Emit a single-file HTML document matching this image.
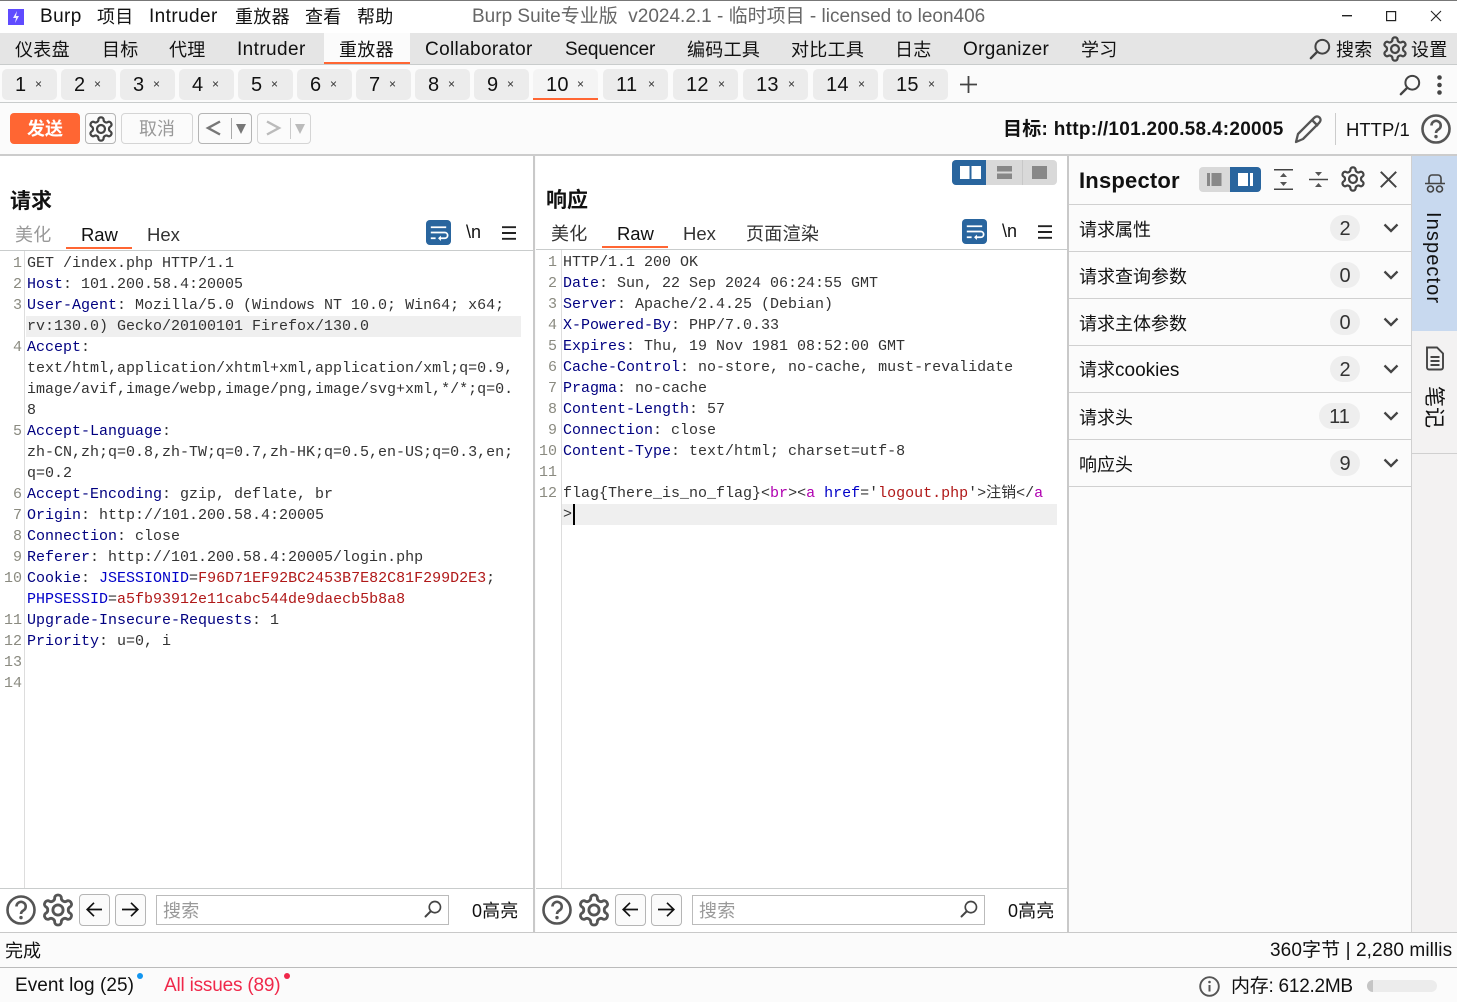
<!DOCTYPE html>
<html lang="zh"><head><meta charset="utf-8"><title>Burp Suite</title>
<style>
html,body{margin:0;padding:0;width:1457px;height:1002px;overflow:hidden;background:#fbfbfb}
body{position:relative;font-family:"Liberation Sans","Noto Sans CJK SC",sans-serif;color:#111}
.t{position:absolute;white-space:nowrap;line-height:20px;height:20px;font-size:19px;letter-spacing:.4px}
.c{font-size:18px;letter-spacing:.3px}
.b{position:absolute}
.tab{position:absolute;top:69px;height:31px;background:#ececec;border-radius:5px}
.tab .n{position:absolute;left:13px;top:6px;font-size:20px;line-height:20px;letter-spacing:.3px}
.tab .x{position:absolute;top:9px;font-size:12px;line-height:12px;color:#333}
svg{position:absolute;overflow:visible}
.code{position:absolute;top:253px;font:15px/21px "Liberation Mono","Noto Sans CJK SC",monospace;color:#333;white-space:pre}
.num{position:absolute;top:253px;width:22px;text-align:right;font:15px/21px "Liberation Mono",monospace;color:#8a8a80;white-space:pre}
.k{color:#000080}.ck{color:#0000c8}.cv{color:#b01818}.tg{color:#b000b0}.at{color:#0000c8}
.ln{position:absolute;background:#c9cccc}
.row{position:absolute;left:1069px;width:342px;height:46px;border-bottom:1.5px solid #d0d0d0}
.pill{position:absolute;top:10px;height:26px;border-radius:13px;background:#eee;font-size:20px;line-height:28px;text-align:center;color:#333}
.btn{position:absolute;border:1px solid #b5b5b5;border-radius:4px;box-sizing:border-box;background:#fbfbfb}
</style></head><body>
<svg width="0" height="0" style="position:absolute"><defs>
<symbol id="gear" viewBox="0 0 24 24"><path fill="none" stroke="currentColor" stroke-width="1.9" d="M12.22 2h-.44a2 2 0 0 0-2 2v.18a2 2 0 0 1-1 1.730l-.43.25a2 2 0 0 1-2 0l-.15-.08a2 2 0 0 0-2.730.73l-.22.38a2 2 0 0 0 .73 2.730l.15.1a2 2 0 0 1 1 1.720v.51a2 2 0 0 1-1 1.740l-.15.09a2 2 0 0 0-.73 2.730l.22.38a2 2 0 0 0 2.730.73l.15-.08a2 2 0 0 1 2 0l.43.25a2 2 0 0 1 1 1.730V20a2 2 0 0 0 2 2h.44a2 2 0 0 0 2-2v-.18a2 2 0 0 1 1-1.730l.43-.25a2 2 0 0 1 2 0l.15.08a2 2 0 0 0 2.730-.73l.22-.39a2 2 0 0 0-.73-2.730l-.15-.08a2 2 0 0 1-1-1.740v-.5a2 2 0 0 1 1-1.740l.15-.09a2 2 0 0 0 .73-2.730l-.22-.38a2 2 0 0 0-2.730-.73l-.15.08a2 2 0 0 1-2 0l-.43-.25a2 2 0 0 1-1-1.730V4a2 2 0 0 0-2-2z"/><circle cx="12" cy="12" r="3.4" fill="none" stroke="currentColor" stroke-width="1.9"/></symbol>
<symbol id="search" viewBox="0 0 24 24"><circle cx="14.5" cy="9.5" r="7.5" fill="none" stroke="currentColor" stroke-width="2.2"/><path d="M9 15 2 22" fill="none" stroke="currentColor" stroke-width="2.6" stroke-linecap="round"/></symbol>
<symbol id="help" viewBox="0 0 30 30"><circle cx="15" cy="15" r="13.5" fill="none" stroke="currentColor" stroke-width="2.6"/><path d="M10.5 11.5a4.6 4.6 0 1 1 7 3.9c-1.6 1-2.5 1.8-2.5 3.6" fill="none" stroke="currentColor" stroke-width="2.6"/><circle cx="15" cy="22.6" r="1.7" fill="currentColor"/></symbol>
<symbol id="wrap" viewBox="0 0 26 26"><rect width="26" height="26" rx="4" fill="#29659e"/><path d="M5 7.5h16M5 13h14.5a2.8 2.8 0 0 1 0 6H14M5 19h5" fill="none" stroke="#fff" stroke-width="1.8"/><path d="M15.5 16.2 12.5 19l3 2.8z" fill="#fff"/></symbol>
<symbol id="burger" viewBox="0 0 14 14"><path d="M0 1.2h14M0 7h14M0 12.8h14" stroke="#222" stroke-width="1.9"/></symbol>
</defs></svg>

<div class="b" style="left:0;top:0;width:1457px;height:1px;background:#777"></div>
<div class="b" style="left:0;top:1px;width:1457px;height:32px;background:#fff"></div>
<!-- logo -->
<svg style="left:8px;top:9px" width="16" height="16" viewBox="0 0 16 16"><rect width="16" height="16" fill="#5f4bff"/><path d="M9 2 5 9h3l-1 5 4-7H8z" fill="#fff" opacity=".9"/></svg>
<span class="t" style="left:40px;top:7px">Burp</span>
<span class="t c" style="left:97px;top:7px">项目</span>
<span class="t" style="left:149px;top:7px">Intruder</span>
<span class="t c" style="left:235px;top:7px">重放器</span>
<span class="t c" style="left:305px;top:7px">查看</span>
<span class="t c" style="left:357px;top:7px">帮助</span>
<span class="t" style="left:472px;top:7px;color:#666;letter-spacing:0;font-size:19px">Burp Suite专业版&nbsp; v2024.2.1 - 临时项目 - licensed to leon406</span>
<svg style="left:1342px;top:15px" width="10" height="2"><rect width="10" height="1.4" fill="#222"/></svg>
<svg style="left:1386px;top:11px" width="10" height="10"><rect x=".6" y=".6" width="9" height="9" fill="none" stroke="#222" stroke-width="1.2"/></svg>
<svg style="left:1431px;top:11px" width="10" height="10"><path d="M0 0 10 10M10 0 0 10" stroke="#222" stroke-width="1.1"/></svg>

<!-- main nav -->
<div class="b" style="left:0;top:33px;width:1457px;height:31px;background:#e5e5e5"></div>
<div class="ln" style="left:0;top:64px;width:1457px;height:1px"></div>
<div class="b" style="left:324px;top:33px;width:86px;background:#fbfbfb;border-bottom:2px solid #ff6633;box-sizing:content-box;height:29px"></div>
<span class="t c" style="left:15px;top:40px">仪表盘</span>
<span class="t c" style="left:102px;top:40px">目标</span>
<span class="t c" style="left:169px;top:40px">代理</span>
<span class="t" style="left:237px;top:40px">Intruder</span>
<span class="t c" style="left:339px;top:40px">重放器</span>
<span class="t" style="left:425px;top:40px;letter-spacing:.35px">Collaborator</span>
<span class="t" style="left:565px;top:40px;letter-spacing:-.2px">Sequencer</span>
<span class="t c" style="left:687px;top:40px">编码工具</span>
<span class="t c" style="left:791px;top:40px">对比工具</span>
<span class="t c" style="left:895px;top:40px">日志</span>
<span class="t" style="left:963px;top:40px;letter-spacing:.3px">Organizer</span>
<span class="t c" style="left:1081px;top:40px">学习</span>
<svg style="left:1309px;top:38px;color:#444" width="22" height="22"><use href="#search"/></svg>
<span class="t c" style="left:1336px;top:40px">搜索</span>
<svg style="left:1381px;top:35px;color:#444" width="28" height="28"><use href="#gear"/></svg>
<span class="t c" style="left:1411px;top:40px">设置</span>

<!-- sub tabs -->
<div class="tab" style="left:2px;width:55px"><span class="n">1</span><span class="x" style="left:33px">×</span></div>
<div class="tab" style="left:61px;width:55px"><span class="n">2</span><span class="x" style="left:33px">×</span></div>
<div class="tab" style="left:120px;width:55px"><span class="n">3</span><span class="x" style="left:33px">×</span></div>
<div class="tab" style="left:179px;width:55px"><span class="n">4</span><span class="x" style="left:33px">×</span></div>
<div class="tab" style="left:238px;width:55px"><span class="n">5</span><span class="x" style="left:33px">×</span></div>
<div class="tab" style="left:297px;width:55px"><span class="n">6</span><span class="x" style="left:33px">×</span></div>
<div class="tab" style="left:356px;width:55px"><span class="n">7</span><span class="x" style="left:33px">×</span></div>
<div class="tab" style="left:415px;width:55px"><span class="n">8</span><span class="x" style="left:33px">×</span></div>
<div class="tab" style="left:474px;width:55px"><span class="n">9</span><span class="x" style="left:33px">×</span></div>
<div class="tab" style="left:533px;width:65px;background:#f4f4f4;border-bottom:2px solid #ff6633;height:29px;border-radius:5px 5px 0 0"><span class="n">10</span><span class="x" style="left:44px">×</span></div>
<div class="tab" style="left:603px;width:65px"><span class="n">11</span><span class="x" style="left:45px">×</span></div>
<div class="tab" style="left:673px;width:65px"><span class="n">12</span><span class="x" style="left:45px">×</span></div>
<div class="tab" style="left:743px;width:65px"><span class="n">13</span><span class="x" style="left:45px">×</span></div>
<div class="tab" style="left:813px;width:65px"><span class="n">14</span><span class="x" style="left:45px">×</span></div>
<div class="tab" style="left:883px;width:65px"><span class="n">15</span><span class="x" style="left:45px">×</span></div>
<svg style="left:960px;top:76px" width="17" height="17"><path d="M8.5 0v17M0 8.500h17" stroke="#444" stroke-width="1.8"/></svg>
<svg style="left:1399px;top:74px;color:#444" width="22" height="22"><use href="#search"/></svg>
<svg style="left:1437px;top:75px" width="5" height="20"><circle cx="2.500" cy="2.500" r="2.300" fill="#444"/><circle cx="2.500" cy="10" r="2.300" fill="#444"/><circle cx="2.500" cy="17.500" r="2.300" fill="#444"/></svg>
<div class="ln" style="left:0;top:102px;width:1457px;height:1px"></div>

<!-- toolbar -->
<div class="b" style="left:10px;top:113px;width:70px;height:31px;background:#ff6633;border-radius:4px;color:#fff;font-weight:bold;font-size:18px;line-height:33px;text-align:center">发送</div>
<div class="btn" style="left:85px;top:113px;width:31px;height:31px"></div>
<svg style="left:87px;top:115px;color:#444" width="28" height="28"><use href="#gear"/></svg>
<div class="btn" style="left:121px;top:113px;width:72px;height:31px;border-color:#d5d5d5;color:#999;font-size:18px;line-height:31px;text-align:center">取消</div>
<div class="btn" style="left:198px;top:113px;width:54px;height:31px"></div>
<svg style="left:206px;top:120px" width="16" height="16"><path d="M14 1.500 2 8l12 6.500" fill="none" stroke="#777" stroke-width="2.400"/></svg>
<div class="b" style="left:231px;top:118px;width:1px;height:21px;background:#aaa"></div>
<svg style="left:236px;top:124px" width="11" height="10"><path d="M0 0h10L5 10z" fill="#777"/></svg>
<div class="btn" style="left:257px;top:113px;width:54px;height:31px;border-color:#d5d5d5"></div>
<svg style="left:265px;top:120px" width="16" height="16"><path d="M2 1.500 14 8 2 14.500" fill="none" stroke="#bbb" stroke-width="2.400"/></svg>
<div class="b" style="left:290px;top:118px;width:1px;height:21px;background:#ccc"></div>
<svg style="left:295px;top:124px" width="11" height="10"><path d="M0 0h10L5 10z" fill="#bbb"/></svg>
<span class="t" style="left:1003px;top:120px;font-weight:bold;font-size:19px;letter-spacing:.28px">目标: http://101.200.58.4:20005</span>
<svg style="left:1294px;top:114px" width="30" height="30" viewBox="0 0 30 30"><path d="M2 28l2-8L20 4c2-2 4-2 5.500-.5s1.500 3.500-.5 5.500L9 25z M18 6l6 6" fill="none" stroke="#555" stroke-width="2.300" stroke-linejoin="round"/></svg>
<div class="b" style="left:1335px;top:113px;width:1px;height:32px;background:#ccc"></div>
<span class="t" style="left:1346px;top:120px;font-size:18.500px;letter-spacing:0">HTTP/1</span>
<svg style="left:1421px;top:114px;color:#555" width="30" height="30"><use href="#help"/></svg>
<div class="b" style="left:0;top:154px;width:1457px;height:2px;background:#ccc"></div>

<!-- panels bg -->
<div class="b" style="left:0;top:156px;width:533px;height:776px;background:#fff"></div>
<div class="b" style="left:536px;top:156px;width:531px;height:776px;background:#fff"></div>
<div class="b" style="left:533px;top:156px;width:2px;height:776px;background:#c9c9c9"></div>
<div class="b" style="left:1067px;top:156px;width:2px;height:776px;background:#c9c9c9"></div>

<!-- Request -->
<span class="t" style="left:10px;top:192px;font-size:21px;font-weight:bold;letter-spacing:0">请求</span>
<span class="t c" style="left:15px;top:225px;color:#999">美化</span>
<span class="t" style="left:81px;top:225px;font-size:18.500px;letter-spacing:-.1px">Raw</span>
<span class="t" style="left:147px;top:225px;font-size:18.500px;letter-spacing:0;color:#333">Hex</span>
<div class="b" style="left:66px;top:247px;width:66px;height:2px;background:#ff6633"></div>
<div class="ln" style="left:0;top:250px;width:533px;height:1px"></div>
<svg style="left:426px;top:220px" width="25" height="25"><use href="#wrap"/></svg>
<span class="t" style="left:466px;top:222px;font-size:18px;letter-spacing:0">\n</span>
<svg style="left:502px;top:226px" width="14" height="14"><use href="#burger"/></svg>
<div class="b" style="left:24px;top:251px;width:1px;height:637px;background:#ddd"></div>
<div class="b" style="left:26px;top:316px;width:495px;height:21px;background:#efefef"></div>
<div class="num" style="left:0">1
2
3

4



5


6
7
8
9
10

11
12
13
14</div>
<div class="code" style="left:27px">GET /index.php HTTP/1.1
<span class="k">Host</span>: 101.200.58.4:20005
<span class="k">User-Agent</span>: Mozilla/5.0 (Windows NT 10.0; Win64; x64;
rv:130.0) Gecko/20100101 Firefox/130.0
<span class="k">Accept</span>:
text/html,application/xhtml+xml,application/xml;q=0.9,
image/avif,image/webp,image/png,image/svg+xml,*/*;q=0.
8
<span class="k">Accept-Language</span>:
zh-CN,zh;q=0.8,zh-TW;q=0.7,zh-HK;q=0.5,en-US;q=0.3,en;
q=0.2
<span class="k">Accept-Encoding</span>: gzip, deflate, br
<span class="k">Origin</span>: http://101.200.58.4:20005
<span class="k">Connection</span>: close
<span class="k">Referer</span>: http://101.200.58.4:20005/login.php
<span class="k">Cookie</span>: <span class="ck">JSESSIONID</span>=<span class="cv">F96D71EF92BC2453B7E82C81F299D2E3</span>;
<span class="ck">PHPSESSID</span>=<span class="cv">a5fb93912e11cabc544de9daecb5b8a8</span>
<span class="k">Upgrade-Insecure-Requests</span>: 1
<span class="k">Priority</span>: u=0, i</div>

<!-- Response -->
<div class="b" style="left:952px;top:160px;width:105px;height:25px;background:#d9d9d9;border-radius:4px"></div>
<div class="b" style="left:952px;top:160px;width:34px;height:25px;background:#29659e;border-radius:4px 0 0 4px"></div>
<svg style="left:960px;top:166px" width="21" height="13"><rect width="9.500" height="13" fill="#fff"/><rect x="11.500" width="9.500" height="13" fill="#fff"/></svg>
<svg style="left:997px;top:166px" width="16" height="13"><rect width="15" height="5.500" fill="#888"/><rect y="7.500" width="15" height="5.500" fill="#888"/></svg>
<div class="b" style="left:1022px;top:160px;width:1px;height:25px;background:#c8c8c8"></div>
<svg style="left:1032px;top:166px" width="16" height="13"><rect width="15" height="13" fill="#888"/></svg>
<span class="t" style="left:546px;top:191px;font-size:21px;font-weight:bold;letter-spacing:0">响应</span>
<span class="t c" style="left:551px;top:224px;color:#333">美化</span>
<span class="t" style="left:617px;top:224px;font-size:18.500px;letter-spacing:-.1px">Raw</span>
<span class="t" style="left:683px;top:224px;font-size:18.500px;letter-spacing:0;color:#333">Hex</span>
<span class="t c" style="left:746px;top:224px;color:#333">页面渲染</span>
<div class="b" style="left:602px;top:246px;width:66px;height:2px;background:#ff6633"></div>
<div class="ln" style="left:536px;top:249px;width:531px;height:1px"></div>
<svg style="left:962px;top:219px" width="25" height="25"><use href="#wrap"/></svg>
<span class="t" style="left:1002px;top:221px;font-size:18px;letter-spacing:0">\n</span>
<svg style="left:1038px;top:225px" width="14" height="14"><use href="#burger"/></svg>
<div class="b" style="left:561px;top:250px;width:1px;height:638px;background:#ddd"></div>
<div class="b" style="left:562px;top:504px;width:495px;height:21px;background:#efefef"></div>
<div class="num" style="left:535px;top:252px">1
2
3
4
5
6
7
8
9
10
11
12</div>
<div class="code" style="left:563px;top:252px">HTTP/1.1 200 OK
<span class="k">Date</span>: Sun, 22 Sep 2024 06:24:55 GMT
<span class="k">Server</span>: Apache/2.4.25 (Debian)
<span class="k">X-Powered-By</span>: PHP/7.0.33
<span class="k">Expires</span>: Thu, 19 Nov 1981 08:52:00 GMT
<span class="k">Cache-Control</span>: no-store, no-cache, must-revalidate
<span class="k">Pragma</span>: no-cache
<span class="k">Content-Length</span>: 57
<span class="k">Connection</span>: close
<span class="k">Content-Type</span>: text/html; charset=utf-8

flag{There_is_no_flag}&lt;<span class="tg">br</span>&gt;&lt;<span class="tg">a</span> <span class="at">href</span>='<span class="cv">logout.php</span>'&gt;注销&lt;/<span class="tg">a</span>
&gt;</div>
<div class="b" style="left:573px;top:504px;width:2px;height:21px;background:#000"></div>

<!-- Bottom search bars -->
<div class="ln" style="left:0;top:888px;width:533px;height:1px"></div>
<div class="ln" style="left:536px;top:888px;width:531px;height:1px"></div>
<svg style="left:6px;top:895px;color:#555" width="30" height="30"><use href="#help"/></svg>
<svg style="left:40px;top:892px;color:#555" width="36" height="36"><use href="#gear"/></svg>
<div class="btn" style="left:79px;top:894px;width:31px;height:32px"></div>
<svg style="left:86px;top:902px" width="17" height="15"><path d="M16 7.500H1M8 .8 1.200 7.500 8 14.200" fill="none" stroke="#111" stroke-width="1.700"/></svg>
<div class="btn" style="left:115px;top:894px;width:31px;height:32px"></div>
<svg style="left:122px;top:902px" width="17" height="15"><path d="M0 7.500h15M9 .8l6.800 6.700L9 14.200" fill="none" stroke="#111" stroke-width="1.700"/></svg>
<div class="b" style="left:156px;top:895px;border:1px solid #bbb;width:291px;height:28px;background:#fff"></div>
<span class="t c" style="left:163px;top:901px;color:#999">搜索</span>
<svg style="left:424px;top:900px;color:#444" width="18" height="18"><use href="#search"/></svg>
<span class="t c" style="left:472px;top:901px;letter-spacing:.1px">0高亮</span>

<svg style="left:542px;top:895px;color:#555" width="30" height="30"><use href="#help"/></svg>
<svg style="left:576px;top:892px;color:#555" width="36" height="36"><use href="#gear"/></svg>
<div class="btn" style="left:615px;top:894px;width:31px;height:32px"></div>
<svg style="left:622px;top:902px" width="17" height="15"><path d="M16 7.500H1M8 .8 1.200 7.500 8 14.200" fill="none" stroke="#111" stroke-width="1.700"/></svg>
<div class="btn" style="left:651px;top:894px;width:31px;height:32px"></div>
<svg style="left:658px;top:902px" width="17" height="15"><path d="M0 7.500h15M9 .8l6.800 6.700L9 14.200" fill="none" stroke="#111" stroke-width="1.700"/></svg>
<div class="b" style="left:692px;top:895px;border:1px solid #bbb;width:291px;height:28px;background:#fff"></div>
<span class="t c" style="left:699px;top:901px;color:#999">搜索</span>
<svg style="left:960px;top:900px;color:#444" width="18" height="18"><use href="#search"/></svg>
<span class="t c" style="left:1008px;top:901px;letter-spacing:.1px">0高亮</span>

<!-- Inspector -->
<span class="t" style="left:1079px;top:171px;font-size:22px;font-weight:bold;letter-spacing:.2px">Inspector</span>
<div class="b" style="left:1199px;top:167px;width:62px;height:25px;background:#d9d9d9;border-radius:4px"></div>
<div class="b" style="left:1230px;top:167px;width:31px;height:25px;background:#29659e;border-radius:0 4px 4px 0"></div>
<svg style="left:1207px;top:173px" width="15" height="13"><rect width="3" height="13" fill="#888"/><rect x="4.500" width="10" height="13" fill="#888"/></svg>
<svg style="left:1238px;top:173px" width="15" height="13"><rect width="10" height="13" fill="#fff"/><rect x="12" width="3" height="13" fill="#fff"/></svg>
<svg style="left:1274px;top:169px" width="20" height="21"><path d="M0 .8h19M0 20.200h19" stroke="#444" stroke-width="1.500"/><path d="M9.500 4 13 8H6zM9.500 17 6 13h7z" fill="#555"/></svg>
<svg style="left:1309px;top:169px" width="20" height="21"><path d="M0 10.500h19" stroke="#444" stroke-width="1.500"/><path d="M9.500 7 6 3h7zM9.500 14l3.500 4H6z" fill="#555"/></svg>
<svg style="left:1339px;top:165px;color:#444" width="28" height="28"><use href="#gear"/></svg>
<svg style="left:1380px;top:171px" width="17" height="17"><path d="M.8.8l15.400 15.400M16.200.8.800 16.200" stroke="#444" stroke-width="2"/></svg>
<div class="ln" style="left:1069px;top:204px;width:342px;height:1px;background:#d0d0d0"></div>

<div class="row" style="top:205px"><span class="t c" style="left:10px;top:15px;letter-spacing:0">请求属性</span><div class="pill" style="left:261px;width:30px">2</div><svg style="left:314px;top:18px" width="16" height="10"><path d="M1.500 1.500 8 8l6.500-6.500" fill="none" stroke="#444" stroke-width="2.300"/></svg></div>
<div class="row" style="top:252px"><span class="t c" style="left:10px;top:15px;letter-spacing:0">请求查询参数</span><div class="pill" style="left:261px;width:30px">0</div><svg style="left:314px;top:18px" width="16" height="10"><path d="M1.500 1.500 8 8l6.500-6.500" fill="none" stroke="#444" stroke-width="2.300"/></svg></div>
<div class="row" style="top:299px"><span class="t c" style="left:10px;top:15px;letter-spacing:0">请求主体参数</span><div class="pill" style="left:261px;width:30px">0</div><svg style="left:314px;top:18px" width="16" height="10"><path d="M1.500 1.500 8 8l6.500-6.500" fill="none" stroke="#444" stroke-width="2.300"/></svg></div>
<div class="row" style="top:346px"><span class="t c" style="left:10px;top:14px;letter-spacing:0">请求<span style="font-size:19px">cookies</span></span><div class="pill" style="left:261px;width:30px">2</div><svg style="left:314px;top:18px" width="16" height="10"><path d="M1.500 1.500 8 8l6.500-6.500" fill="none" stroke="#444" stroke-width="2.300"/></svg></div>
<div class="row" style="top:393px"><span class="t c" style="left:10px;top:15px;letter-spacing:0">请求头</span><div class="pill" style="left:250px;width:41px">11</div><svg style="left:314px;top:18px" width="16" height="10"><path d="M1.500 1.500 8 8l6.500-6.500" fill="none" stroke="#444" stroke-width="2.300"/></svg></div>
<div class="row" style="top:440px"><span class="t c" style="left:10px;top:15px;letter-spacing:0">响应头</span><div class="pill" style="left:261px;width:30px">9</div><svg style="left:314px;top:18px" width="16" height="10"><path d="M1.500 1.500 8 8l6.500-6.500" fill="none" stroke="#444" stroke-width="2.300"/></svg></div>

<!-- Side rail -->
<div class="b" style="left:1411px;top:156px;width:46px;height:776px;background:#f3f2f2;border-left:1px solid #d0d0d0;box-sizing:border-box"></div>
<div class="b" style="left:1412px;top:156px;width:45px;height:175px;background:#c8d9ef"></div>
<div class="b" style="left:1412px;top:453px;width:45px;height:1px;background:#d0d0d0"></div>
<svg style="left:1425px;top:174px" width="20" height="19" viewBox="0 0 20 19"><path d="M4 9V4a3 3 0 0 1 3-3h6a3 3 0 0 1 3 3v5M0 9.500h20" fill="none" stroke="#444" stroke-width="1.600"/><circle cx="5.500" cy="15" r="3" fill="none" stroke="#444" stroke-width="1.600"/><circle cx="14.500" cy="15" r="3" fill="none" stroke="#444" stroke-width="1.600"/></svg>
<span class="t" style="left:1423px;top:212px;font-size:20px;letter-spacing:1.1px;transform-origin:0 0;transform:translate(20px,0) rotate(90deg)">Inspector</span>
<svg style="left:1425px;top:346px" width="20" height="25" viewBox="0 0 20 25"><path d="M2 1.500h10l6 6v14a2 2 0 0 1-2 2H4a2 2 0 0 1-2-2z M5.500 11h9M5.500 15h9M5.500 19h9" fill="none" stroke="#444" stroke-width="1.900"/></svg>
<span class="t c" style="left:1423px;top:386px;letter-spacing:0;font-size:21px;transform-origin:0 0;transform:translate(20px,0) rotate(90deg)">笔记</span>

<!-- Status -->
<div class="b" style="left:0;top:932px;width:1457px;height:1px;background:#c9c9c9"></div>
<span class="t c" style="left:5px;top:941px;letter-spacing:0">完成</span>
<span class="t" style="left:1270px;top:941px;letter-spacing:.1px;font-size:19px">360字节 | 2,280 millis</span>
<div class="b" style="left:0;top:967px;width:1457px;height:1px;background:#bbb"></div>
<span class="t" style="left:15px;top:976px;letter-spacing:.05px">Event log (25)</span>
<div class="b" style="left:137px;top:973px;width:6px;height:6px;border-radius:3px;background:#1296f0"></div>
<span class="t" style="left:164px;top:976px;color:#f0284a;letter-spacing:-.2px">All issues (89)</span>
<div class="b" style="left:284px;top:973px;width:6px;height:6px;border-radius:3px;background:#f0284a"></div>
<svg style="left:1199px;top:976px" width="21" height="21" viewBox="0 0 21 21"><circle cx="10.500" cy="10.500" r="9.300" fill="none" stroke="#555" stroke-width="1.900"/><path d="M10.500 9v6.500" stroke="#555" stroke-width="2"/><circle cx="10.500" cy="6" r="1.300" fill="#555"/></svg>
<span class="t" style="left:1231px;top:977px;letter-spacing:-.25px">内存: 612.2MB</span>
<div class="b" style="left:1367px;top:980px;width:70px;height:12px;border-radius:6px;background:#ececec;overflow:hidden"><div style="width:6px;height:12px;background:#c5c5c5"></div></div>
</body></html>
